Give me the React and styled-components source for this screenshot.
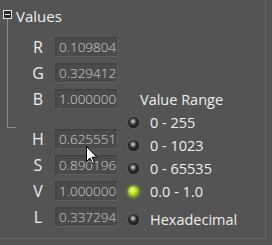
import React from 'react';
import styled, { createGlobalStyle } from 'styled-components';

const GlobalStyle = createGlobalStyle`
  html, body {
    margin: 0;
    padding: 0;
    background: #545454;
  }
  body {
    font-family: "Open Sans", "DejaVu Sans", sans-serif;
    color: #ececec;
  }
`;

const Frame = styled.div`
  position: relative;
  width: 266px;
  height: 239px;
  box-sizing: border-box;
  border-right: 1px solid #666666;
  border-bottom: 1px solid #666666;
  display: flex;
`;

const Gutter = styled.div`
  display: flex;
  flex-direction: column;
  width: 16px;
  padding: 10px 0 0 3px;
  box-sizing: border-box;
`;

const MinusBox = styled.div`
  width: 9px;
  height: 9px;
  box-sizing: border-box;
  border: 1px solid #e6e6e6;
  background: #2a2a2a;
  display: flex;
  align-items: center;
  justify-content: center;
  &::after {
    content: '';
    width: 5px;
    height: 1px;
    background: #f2f2f2;
  }
`;

const Branch = styled.div`
  margin-left: 4px;
  width: 9px;
  height: 109px;
  box-sizing: border-box;
  border-left: 1px solid #8a8a8a;
  border-bottom: 1px solid #8a8a8a;
`;

const Main = styled.div`
  display: flex;
  flex-direction: column;
`;

const Title = styled.div`
  margin-top: 6px;
  font-size: 15px;
  line-height: 20px;
  color: #efefef;
`;

const Body = styled.div`
  display: flex;
`;

const Fields = styled.div`
  display: flex;
  flex-direction: column;
  gap: 6px;
  margin-top: 11px;
  margin-left: 11px;
`;

const Row = styled.div`
  display: flex;
  align-items: center;
  gap: 6px;
  height: 20px;
  margin-top: ${(p) => (p.$spaced ? '14px' : '0')};
`;

const Label = styled.span`
  width: 22px;
  text-align: center;
  font-size: 16px;
  line-height: 20px;
  color: #ededed;
`;

const Field = styled.div`
  width: 63px;
  height: 20px;
  box-sizing: border-box;
  padding-left: 3px;
  overflow: hidden;
  white-space: nowrap;
  background: #4b4b4b;
  border: 1px solid #424242;
  border-bottom-color: #5e5e5e;
  border-right-color: #5a5a5a;
  box-shadow: inset 1px 1px 0 #464646;
  font-size: 13.5px;
  font-weight: 300;
  line-height: 18px;
  color: #d2d2d2;
`;

const Options = styled.div`
  display: flex;
  flex-direction: column;
  margin-top: 62px;
  margin-left: 10px;
`;

const RangeTitle = styled.div`
  padding-left: 12px;
  height: 23px;
  font-size: 14.5px;
  line-height: 23px;
  color: #ededed;
`;

const Option = styled.div`
  display: flex;
  align-items: center;
  gap: 11px;
  height: 23px;
  margin-top: ${(p) => (p.$spaced ? '5px' : '0')};
  font-size: 14.5px;
  color: #ededed;
  white-space: nowrap;
`;

const Radio = styled.span`
  width: 11px;
  height: 11px;
  border-radius: 50%;
  flex: none;
  background: ${(p) =>
    p.$on
      ? 'radial-gradient(circle at 42% 40%, #f6ffa8 0, #cfe834 30%, #86b214 65%, #4f6e0c 100%)'
      : 'radial-gradient(circle at 45% 40%, #f0f0f0 0, #9a9a9a 14%, #2c2c2c 40%, #1a1a1a 75%, #6a6a6a 100%)'};
  box-shadow: ${(p) => (p.$on ? '0 0 3px 1px rgba(150, 210, 60, 0.6)' : '0 0 0 1px #5f5f5f')};
`;

const Cursor = styled.svg`
  position: absolute;
  left: 86px;
  top: 146px;
`;

const top = [
  ['R', '0.109804'],
  ['G', '0.329412'],
  ['B', '1.000000'],
];

const bottom = [
  ['H', '0.625551'],
  ['S', '0.890196'],
  ['V', '1.000000'],
  ['L', '0.337294'],
];

const ranges = [
  { label: '0 - 255' },
  { label: '0 - 1023' },
  { label: '0 - 65535' },
  { label: '0.0 - 1.0', on: true },
  { label: 'Hexadecimal', spaced: true },
];

export default function App() {
  return (
    <>
      <GlobalStyle />
      <Frame>
        <Gutter>
          <MinusBox />
          <Branch />
        </Gutter>
        <Main>
          <Title>Values</Title>
          <Body>
            <Fields>
              {top.map(([l, v]) => (
                <Row key={l}>
                  <Label>{l}</Label>
                  <Field>{v}</Field>
                </Row>
              ))}
              {bottom.map(([l, v], i) => (
                <Row key={l} $spaced={i === 0}>
                  <Label>{l}</Label>
                  <Field>{v}</Field>
                </Row>
              ))}
            </Fields>
            <Options>
              <RangeTitle>Value Range</RangeTitle>
              {ranges.map((r) => (
                <Option key={r.label} $spaced={r.spaced}>
                  <Radio $on={r.on} />
                  {r.label}
                </Option>
              ))}
            </Options>
          </Body>
        </Main>
        <Cursor width="12" height="19" viewBox="0 0 12 19">
          <path d="M0.5 0.5 L0.5 15.5 L4 12 L6.5 17.5 L8.5 16.5 L6 11.2 L10.8 11.2 Z" fill="#ffffff" stroke="#000000" strokeWidth="1" />
        </Cursor>
      </Frame>
    </>
  );
}
